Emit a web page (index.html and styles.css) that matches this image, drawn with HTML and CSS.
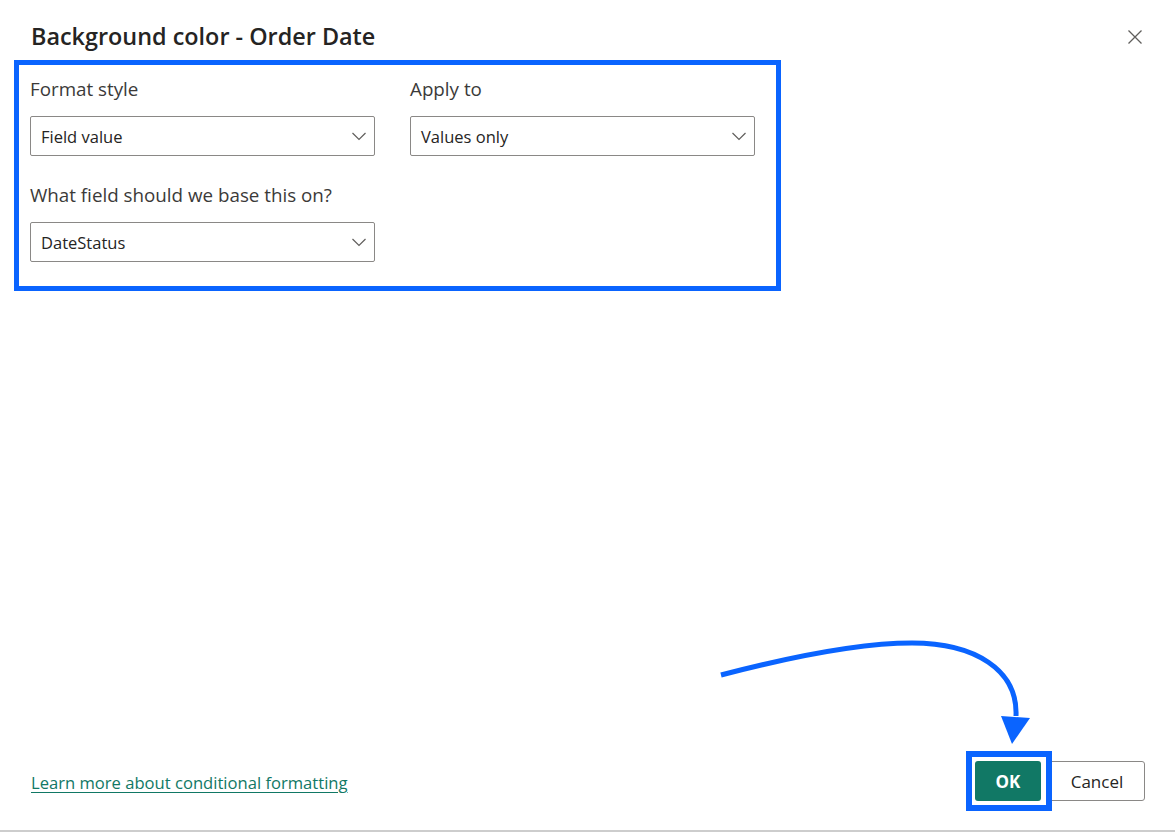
FILE: index.html
```html
<!DOCTYPE html>
<html lang="en">
<head>
<meta charset="utf-8">
<title>Background color - Order Date</title>
<link rel="stylesheet" href="styles.css">
</head>
<body>
<div class="dialog">
  <header class="dlg-header">
    <h1 class="dlg-title">Background color - Order Date</h1>
    <button class="close-btn" aria-label="Close">
      <svg width="14" height="14" viewBox="0 0 14 14"><path d="M0.5 0.5 L13.5 13.5 M13.5 0.5 L0.5 13.5" stroke="#605e5c" stroke-width="1.3" fill="none"/></svg>
    </button>
  </header>

  <section class="highlight-box">
    <div class="form-grid">
      <div class="field">
        <label class="field-label">Format style</label>
        <div class="dropdown"><span>Field value</span>
          <svg class="chev" width="16" height="16" viewBox="0 0 16 16"><polyline points="1.5,5 8,11.5 14.5,5" fill="none" stroke="#605e5c" stroke-width="1.2"/></svg>
        </div>
      </div>
      <div class="field">
        <label class="field-label">Apply to</label>
        <div class="dropdown"><span>Values only</span>
          <svg class="chev" width="16" height="16" viewBox="0 0 16 16"><polyline points="1.5,5 8,11.5 14.5,5" fill="none" stroke="#605e5c" stroke-width="1.2"/></svg>
        </div>
      </div>
      <div class="field field-wide">
        <label class="field-label">What field should we base this on?</label>
        <div class="dropdown"><span>DateStatus</span>
          <svg class="chev" width="16" height="16" viewBox="0 0 16 16"><polyline points="1.5,5 8,11.5 14.5,5" fill="none" stroke="#605e5c" stroke-width="1.2"/></svg>
        </div>
      </div>
    </div>
  </section>

  <div class="spacer"></div>

  <footer class="dlg-footer">
    <a class="learn-link" href="#">Learn more about conditional formatting</a>
    <div class="actions">
      <button class="btn btn-primary">OK</button>
      <button class="btn btn-secondary">Cancel</button>
    </div>
  </footer>

  <svg class="annot-arrow" width="1175" height="832" viewBox="0 0 1175 832">
    <path d="M721 675 C 790 657, 860 643, 912 643 C 975 643, 1018 670, 1016 716" fill="none" stroke="#0a64ff" stroke-width="5" stroke-linecap="butt"/>
    <polygon points="1001,716 1030,718 1012,744" fill="#0a64ff"/>
  </svg>
</div>
</body>
</html>
```

FILE: styles.css
```css
* { box-sizing: border-box; }
html, body { margin: 0; padding: 0; background: #ffffff; }
body {
  font-family: "Open Sans", "Noto Sans", "Liberation Sans", sans-serif;
  color: #252423;
}
.dialog {
  position: relative;
  width: 1175px;
  height: 832px;
  display: flex;
  flex-direction: column;
  border-bottom: 2px solid #cdcdcd;
}
.dlg-header {
  display: flex;
  align-items: flex-start;
  justify-content: space-between;
  padding: 20px 33px 0 31px;
  height: 60px;
}
.dlg-title {
  margin: 0;
  font-size: 23.4px;
  font-weight: 600;
  line-height: 32px;
  color: #252423;
}
.close-btn {
  margin-top: 10px;
  padding: 0;
  border: 0;
  background: none;
  width: 14px;
  height: 14px;
  display: flex;
}
.highlight-box {
  margin-left: 14px;
  width: 767px;
  border: 5px solid #0a64ff;
  padding: 12px 21px 24px 11px;
}
.form-grid {
  display: grid;
  grid-template-columns: 345px 345px;
  column-gap: 35px;
  row-gap: 27px;
}
.field { display: flex; flex-direction: column; }
.field-wide { grid-column: 1 / 2; }
.field-label {
  font-size: 18.8px;
  line-height: 24px;
  color: #3b3a39;
  margin-bottom: 15px;
}
.dropdown {
  height: 40px;
  border: 1px solid #8a8886;
  border-radius: 2px;
  display: flex;
  align-items: center;
  justify-content: space-between;
  padding: 0 7px 0 10px;
  font-size: 16.5px;
  color: #252423;
}
.chev { display: block; }
.spacer { flex: 1; }
.dlg-footer {
  display: flex;
  align-items: center;
  justify-content: space-between;
  padding: 0 30px 29px 31px;
}
.learn-link {
  font-size: 16.6px;
  line-height: 24px;
  margin-top: 4px;
  color: #117865;
  text-decoration: underline;
  text-underline-offset: 3px;
}
.actions { display: flex; gap: 8px; }
.btn {
  height: 40px;
  border-radius: 3px;
  font-family: inherit;
  font-size: 17px;
  cursor: pointer;
  padding: 0;
}
.btn-primary {
  position: relative;
  z-index: 1;
  width: 66px;
  background: #117865;
  color: #ffffff;
  font-weight: 700;
  border: 0;
}
.btn-primary::after {
  content: "";
  position: absolute;
  left: -9px;
  top: -10px;
  right: -11px;
  bottom: -10px;
  border: 6px solid #0a64ff;
  pointer-events: none;
}
.btn-secondary {
  width: 96px;
  background: #ffffff;
  color: #252423;
  border: 1px solid #8a8886;
}
.annot-arrow {
  position: absolute;
  left: 0;
  top: 0;
  pointer-events: none;
}
```
